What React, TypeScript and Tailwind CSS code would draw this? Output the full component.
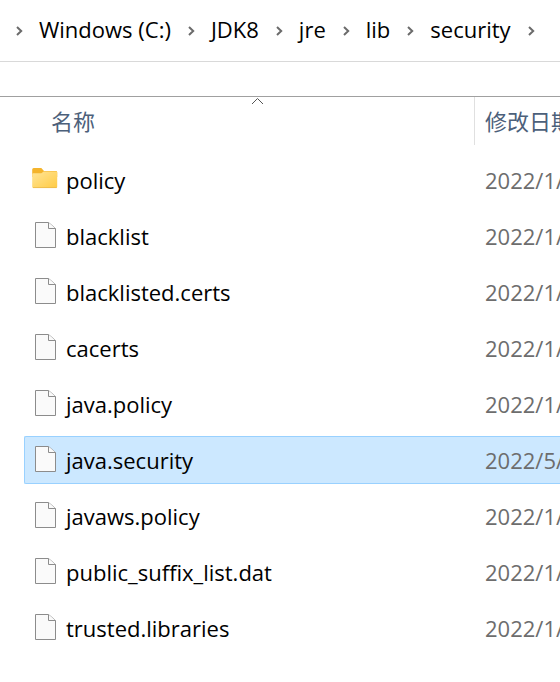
import { Fragment } from "react";

type Entry = {
  name: string;
  modified: string;
  folder?: boolean;
  selected?: boolean;
};

const crumbs = ["Windows (C:)", "JDK8", "jre", "lib", "security"];

const entries: Entry[] = [
  { name: "policy", modified: "2022/1/", folder: true },
  { name: "blacklist", modified: "2022/1/" },
  { name: "blacklisted.certs", modified: "2022/1/" },
  { name: "cacerts", modified: "2022/1/" },
  { name: "java.policy", modified: "2022/1/" },
  { name: "java.security", modified: "2022/5/", selected: true },
  { name: "javaws.policy", modified: "2022/1/" },
  { name: "public_suffix_list.dat", modified: "2022/1/" },
  { name: "trusted.libraries", modified: "2022/1/" },
];

function Chevron() {
  return (
    <svg className="h-3 w-2 shrink-0" viewBox="0 0 8 12" fill="none" stroke="#6b6b6b" strokeWidth="2" aria-hidden="true">
      <path d="M2 2 6.2 6 2 10" />
    </svg>
  );
}

function FolderIcon() {
  return (
    <svg className="h-[26px] w-[26px] shrink-0" viewBox="0 0 26 26" aria-hidden="true">
      <defs>
        <linearGradient id="folder-front" x1="0" y1="0" x2="1" y2="1">
          <stop offset="0" stopColor="#ffe598" />
          <stop offset="1" stopColor="#ffcb44" />
        </linearGradient>
      </defs>
      <path d="M.2 3.5A1.5 1.5 0 0 1 1.7 2h7.6L12 5h12a1.2 1.2 0 0 1 1.2 1.2V11H.2Z" fill="#f4b42c" />
      <path d="M.2 8.2a1 1 0 0 1 1-1h8.1l2.4-1.7h12.5a1 1 0 0 1 1 1v14.2a1.2 1.2 0 0 1-1.2 1.2H1.4A1.2 1.2 0 0 1 .2 20.7Z" fill="url(#folder-front)" />
      <path d="M1 21.6h23.6" stroke="#e9b64a" strokeWidth=".8" />
    </svg>
  );
}

function FileIcon() {
  return (
    <svg className="h-[26px] w-[26px] shrink-0" viewBox="0 0 26 26" fill="#fafafa" stroke="#8c8c8c" aria-hidden="true">
      <path d="M3.5.5h13l7 6v19h-20Z" />
      <path d="M16.5.5v6h7" />
    </svg>
  );
}

function Row({ entry }: { entry: Entry }) {
  const name = entry.selected
    ? "rounded-l-xs border border-r-0 border-[#99d1ff] bg-[#cce8ff]"
    : "border border-r-0 border-transparent";
  const date = entry.selected
    ? "border-y border-[#99d1ff] bg-[#cce8ff]"
    : "border-y border-transparent";

  return (
    <tr aria-selected={entry.selected}>
      <td className="h-14 p-0">
        <div className={`flex h-12 items-center gap-2 pl-[7px] ${name}`}>
          <div className="pb-0.5">{entry.folder ? <FolderIcon /> : <FileIcon />}</div>
          <span className="text-black">{entry.name}</span>
        </div>
      </td>
      <td className="h-14 p-0">
        <div className={`flex h-12 items-center overflow-hidden pl-[11px] whitespace-nowrap text-[#6d6d6d] ${date}`}>
          {entry.modified}
        </div>
      </td>
    </tr>
  );
}

export default function App() {
  return (
    <main className="min-h-screen overflow-hidden bg-white font-['Open_Sans','Noto_Sans_CJK_SC',sans-serif] text-[22px] leading-8 text-black">
      <nav className="flex h-[62px] items-center gap-4 border-b border-[#d9d9d9] pl-[15px] whitespace-nowrap" aria-label="Path">
        <Chevron />
        {crumbs.map((crumb) => (
          <Fragment key={crumb}>
            <a href="#" className="pb-1">{crumb}</a>
            <Chevron />
          </Fragment>
        ))}
      </nav>

      <div className="mt-[34px] border-t border-[#a0a0a0] pl-6">
        <table className="w-full table-fixed border-separate border-spacing-0">
          <thead>
            <tr className="text-left text-[#4c607a]">
              <th className="relative h-[55px] w-[450px] p-0 align-top font-normal">
                <div className="flex h-12 items-center pl-[27px]">名称</div>
                <svg className="absolute top-0 left-[227px] h-2 w-3" viewBox="0 0 12 8" fill="none" stroke="#555" aria-hidden="true">
                  <path d="M1 7 6.5 1.5 12 7" />
                </svg>
              </th>
              <th className="h-[55px] p-0 align-top font-normal">
                <div className="flex h-12 items-center overflow-hidden border-l border-[#e0e0e0] pl-[10px] whitespace-nowrap">修改日期</div>
              </th>
            </tr>
          </thead>
          <tbody>
            {entries.map((entry) => (
              <Row key={entry.name} entry={entry} />
            ))}
          </tbody>
        </table>
      </div>
    </main>
  );
}
